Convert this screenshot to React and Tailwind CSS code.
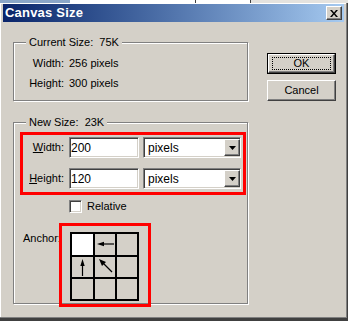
const raised = 'border border-t-white border-l-white border-r-[#404040] border-b-[#404040] shadow-[inset_-1px_-1px_0_#808080]'
const sunken = 'border border-t-[#808080] border-l-[#808080] border-r-white border-b-white shadow-[inset_1px_1px_0_#404040,inset_-1px_-1px_0_#d4d0c8]'
const etched = 'border border-[#808080] shadow-[inset_1px_1px_0_#ffffff,1px_1px_0_#ffffff]'

function Legend({ children }) {
  return (
    <span className="absolute left-[12px] top-[-7px] bg-[#d4d0c8] px-[3px] text-[11px] leading-[13px] whitespace-pre">
      {children}
    </span>
  )
}

function DropButton() {
  return (
    <div className={`flex h-full w-[16px] items-center justify-center bg-[#d4d0c8] ${raised}`}>
      <svg width="7" height="4" viewBox="0 0 7 4">
        <polygon points="0,0 7,0 3.5,4" fill="#000" />
      </svg>
    </div>
  )
}

function SizeRow({ label, accel, value }) {
  return (
    <div className="flex h-[21px] items-center">
      <span className="w-[41px] text-right text-[11px] whitespace-nowrap">
        <span className="underline">{accel}</span>
        {label}
      </span>
      <div className={`ml-[5px] flex h-[21px] w-[70px] items-center bg-white pl-[1px] text-[12px] ${sunken}`}>{value}</div>
      <div className={`ml-[4px] flex h-[21px] w-[98px] items-center bg-white ${sunken}`}>
        <span className="flex-1 pl-[4px] text-[12px]">pixels</span>
        <div className="h-[17px]">
          <DropButton />
        </div>
      </div>
    </div>
  )
}

function Arrow({ dir }) {
  if (dir === 'left')
    return (
      <svg width="20" height="20" viewBox="0 0 20 20">
        <line x1="6" y1="10" x2="19" y2="10" stroke="#000" strokeWidth="1.2" />
        <polygon points="2,10 9,7.8 9,12.2" fill="#000" />
      </svg>
    )
  if (dir === 'up')
    return (
      <svg width="21" height="20" viewBox="0 0 21 20">
        <line x1="10.5" y1="7" x2="10.5" y2="19" stroke="#000" strokeWidth="1.2" />
        <polygon points="10.5,2 8.3,9 12.7,9" fill="#000" />
      </svg>
    )
  return (
    <svg width="20" height="20" viewBox="0 0 20 20">
      <line x1="8" y1="6" x2="17" y2="15" stroke="#000" strokeWidth="1.2" />
      <polygon points="4,2 11,5 7,9" fill="#000" />
    </svg>
  )
}

function AnchorGrid() {
  const cells = [
    { white: true },
    { arrow: 'left' },
    {},
    { arrow: 'up' },
    { arrow: 'diag' },
    {},
    {},
    {},
    {},
  ]
  return (
    <div className="grid grid-cols-[21px_20px_20px] grid-rows-[21px_20px_20px] gap-[2px] bg-black p-[2px]">
      {cells.map((c, i) => (
        <div key={i} className={`flex items-center justify-center ${c.white ? 'bg-white' : 'bg-[#d4d0c8]'}`}>
          {c.arrow && <Arrow dir={c.arrow} />}
        </div>
      ))}
    </div>
  )
}

export default function App() {
  return (
    <div className="h-[321px] w-[348px] overflow-hidden bg-[#d4d0c8] text-black font-['Liberation_Sans',Arial,sans-serif]">
      <div className="flex h-[3px]">
        <div className="w-[70px] bg-[#8aa6c8]" />
        <div className="w-[125px] bg-white" />
        <div className="w-[1px] bg-[#404040]" />
        <div className="w-[54px] bg-white" />
        <div className="w-[1px] bg-[#404040]" />
        <div className="flex-1 bg-[#e4e2de]" />
      </div>

      <div className="flex h-[318px] flex-col border-b-[3px] border-r border-b-[#404040] border-r-[#404040] shadow-[inset_-1px_-1px_0_#808080,inset_1px_1px_0_#ffffff]">
        <div className="mx-[3px] mt-[1px] flex h-[18px] items-center bg-gradient-to-r from-[#0a246a] to-[#a6caf0] pl-[2px] pr-[2px]">
          <span className="flex-1 text-[13px] font-bold tracking-[0.2px] text-white">Canvas Size</span>
          <div className={`flex h-[14px] w-[16px] items-center justify-center bg-[#d4d0c8] ${raised}`}>
            <svg width="8" height="7" viewBox="0 0 8 7">
              <path d="M0 0h2l2 2.5 2-2.5h2l-3 3.5 3 3.5h-2l-2-2.5-2 2.5h-2l3-3.5z" fill="#000" />
            </svg>
          </div>
        </div>

        <div className="flex pl-[13px] pt-[20px]">
          <div className="flex w-[236px] flex-col">
            <div className={`relative h-[59px] w-[235px] ${etched}`}>
              <Legend>Current Size:  75K</Legend>
              <div className="pt-[10px] text-[11px]">
                <div className="flex h-[20px] items-center">
                  <span className="w-[50px] text-right">Width:</span>
                  <span className="ml-[5px]">256 pixels</span>
                </div>
                <div className="flex h-[20px] items-center">
                  <span className="w-[50px] text-right">Height:</span>
                  <span className="ml-[5px]">300 pixels</span>
                </div>
              </div>
            </div>

            <div className={`relative mt-[21px] h-[182px] w-[235px] ${etched}`}>
              <Legend>New Size:  23K</Legend>
              <div className="pl-[6px] pt-[9px]">
                <div className="flex w-[226px] flex-col gap-[10px] border-[3px] border-[#ff0000] pb-[3px] pt-[2px]">
                  <SizeRow accel="W" label="idth:" value="200" />
                  <SizeRow accel="H" label="eight:" value="120" />
                </div>

                <div className="mt-[3px] flex items-center pl-[49px]">
                  <div className={`h-[13px] w-[13px] bg-white ${sunken}`} />
                  <span className="ml-[5px] text-[11px]">Relative</span>
                </div>

                <div className="mt-[8px] flex items-start pl-[3px]">
                  <span className="mt-[7px] w-[36px] text-[11px] whitespace-nowrap">Anchor:</span>
                  <div className="border-[3px] border-[#ff0000] pb-[3px] pl-[8px] pr-[9px] pt-[6px]">
                    <AnchorGrid />
                  </div>
                </div>
              </div>
            </div>
          </div>

          <div className="ml-[18px] flex flex-col gap-[6px] pt-[11px]">
            <div className="h-[21px] w-[69px] border border-black">
              <div className={`flex h-full w-full items-center justify-center bg-[#d4d0c8] ${raised}`}>
                <div className="flex h-[13px] w-[59px] items-center justify-center border border-dotted border-black text-[11px]">
                  OK
                </div>
              </div>
            </div>
            <div className={`flex h-[21px] w-[69px] items-center justify-center bg-[#d4d0c8] text-[11px] ${raised}`}>
              Cancel
            </div>
          </div>
        </div>
      </div>
    </div>
  )
}
